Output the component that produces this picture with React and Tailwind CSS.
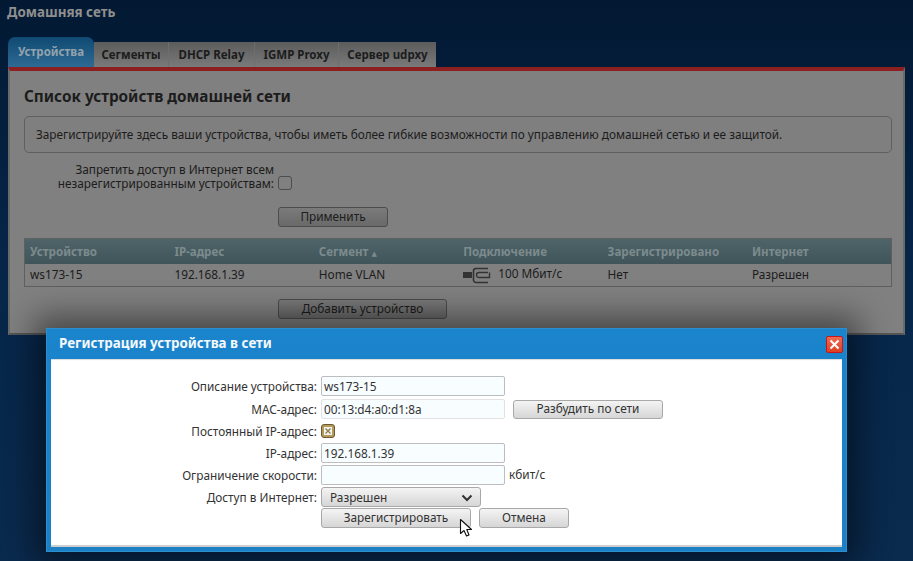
import React from "react";

function Btn({ className = "", children }) {
  return (
    <div className={"flex items-center justify-center rounded-[3px] border border-[#a8a8a8] bg-gradient-to-b from-[#f4f4f4] to-[#d6d6d6] text-[11.8px] leading-none text-[#333] " + className}>
      {children}
    </div>
  );
}

function DimBtn({ className = "", children }) {
  return (
    <div className={"flex items-center justify-center rounded-[3px] border border-[#4c4c4c] bg-gradient-to-b from-[#7b7b7b] to-[#696969] text-[11.8px] leading-none text-[#1c1c1c] " + className}>
      {children}
    </div>
  );
}

function Row({ label, className = "", children }) {
  return (
    <div className={"flex items-center " + className}>
      <div className="w-[270px] pr-[4px] pt-[1px] text-right text-[11.8px] leading-none text-[#333]">{label}</div>
      {children}
    </div>
  );
}

function Input({ value, className = "border-[#bdbdbd]" }) {
  return (
    <div className={"flex h-[20px] w-[184px] items-center rounded-[2px] border bg-[#f8fdff] pl-[2px] pt-[1px] text-[11.8px] leading-none text-[#333] " + className}>
      {value}
    </div>
  );
}

const cols = ["Устройство", "IP-адрес", "Сегмент", "Подключение", "Зарегистрировано", "Интернет"];

export default function App() {
  return (
    <div
      className="relative h-[561px] w-[913px] overflow-hidden bg-gradient-to-b from-[#031933] via-[#06264a] to-[#0a2a4e] text-[#1c1c1c]"
      style={{ fontFamily: '"Noto Sans", "DejaVu Sans", sans-serif' }}
    >
      <div className="px-[7px] pt-[4px] text-[13.4px] font-bold leading-[17px] text-[#8f8f8f]">Домашняя сеть</div>

      <div className="ml-[8px] mt-[16px] flex h-[30px] w-[897px] items-end text-[11.5px] font-bold">
        <div className="flex h-[30px] w-[86px] items-center justify-center rounded-t-[7px] bg-gradient-to-b from-[#0f4a73] to-[#2d6a94] pb-[1px] text-[#93a3ad]">Устройства</div>
        <div className="flex h-[25px] w-[75px] items-center justify-center border-r border-[#6e6e6e] bg-gradient-to-b from-[#5c5c5c] to-[#7a7a7a] text-[#1c1c1c]">Сегменты</div>
        <div className="flex h-[25px] w-[86px] items-center justify-center border-r border-[#6e6e6e] bg-gradient-to-b from-[#5c5c5c] to-[#7a7a7a] text-[#1c1c1c]">DHCP Relay</div>
        <div className="flex h-[25px] w-[84px] items-center justify-center border-r border-[#6e6e6e] bg-gradient-to-b from-[#5c5c5c] to-[#7a7a7a] text-[#1c1c1c]">IGMP Proxy</div>
        <div className="flex h-[25px] w-[97px] items-center justify-center bg-gradient-to-b from-[#5c5c5c] to-[#7a7a7a] text-[#1c1c1c]">Сервер udpxy</div>
      </div>

      <div className="mx-[8px] h-[268px] w-[897px] border-x-[2px] border-b-[2px] border-t-[4px] border-x-[#6a6a6a] border-b-[#555] border-t-[#8c1f1f] bg-[#808080] pl-[14px] pr-[11px]">
        <div className="pt-[15px] text-[15.3px] font-bold leading-[20px] text-[#1c1c1c]">Список устройств домашней сети</div>
        <div className="mt-[10px] flex h-[37px] items-center rounded-[5px] border border-[#5f5f5f] bg-[#7f7f7f] pl-[11px] text-[11.8px] leading-none text-[#1c1c1c]">
          Зарегистрируйте здесь ваши устройства, чтобы иметь более гибкие возможности по управлению домашней сетью и ее защитой.
        </div>
        <div className="mt-[9px] flex w-[268px] items-end text-[11.8px] leading-[14px]">
          <div className="flex-1 text-right">Запретить доступ в Интернет всем<br />незарегистрированным устройствам:</div>
          <div className="ml-[4px] h-[14px] w-[14px] shrink-0 rounded-[3px] border border-[#4d4d4d]" />
        </div>
        <DimBtn className="ml-[254px] mt-[17px] h-[20px] w-[110px]">Применить</DimBtn>

        <div className="mt-[11px] border border-[#5f5f5f]">
          <div className="grid h-[25px] grid-cols-[repeat(6,144.4px)] items-center bg-gradient-to-b from-[#4f6468] to-[#3f5559] pl-[5px] text-[11.6px] font-bold text-[#7d8b8e]">
            {cols.map((c) => (
              <div key={c}>{c}{c === "Сегмент" ? <span className="ml-[3px] text-[7px]">▲</span> : null}</div>
            ))}
          </div>
          <div className="grid h-[22px] grid-cols-[repeat(6,144.4px)] items-center pl-[5px] text-[11.8px] leading-none text-[#1c1c1c]">
            <div>ws173-15</div>
            <div>192.168.1.39</div>
            <div>Home VLAN</div>
            <div className="flex items-center">
              <svg width="28" height="17" viewBox="0 0 28 17" className="mr-[7px]">
                <rect x="0" y="5" width="9" height="6" fill="#333" />
                <path d="M25 1.5H13a2.5 2.5 0 0 0-2.5 2.5V13a2.5 2.5 0 0 0 2.5 2.5H25" fill="none" stroke="#333" strokeWidth="1.6" />
                <path d="M25 5.5H16a2.5 2.5 0 0 0 0 5H26.5V5.5" fill="none" stroke="#333" strokeWidth="1.4" />
              </svg>
              <span className="-translate-y-[1px]">100 Мбит/с</span>
            </div>
            <div>Нет</div>
            <div>Разрешен</div>
          </div>
        </div>
        <DimBtn className="ml-[254px] mt-[12px] h-[20px] w-[169px]">Добавить устройство</DimBtn>
      </div>

      <div className="absolute left-[46px] top-[328px] flex h-[224px] w-[801px] flex-col border border-[#2a8fd0] bg-gradient-to-b from-[#1a84cc] to-[#1c80c4] px-[4px] pb-[4px] shadow-[0_0_30px_12px_rgba(0,0,0,0.45)]">
        <div className="flex h-[30px] shrink-0 items-center justify-between pl-[8px]">
          <div className="text-[13.4px] font-bold leading-none text-[#f4f8fb]">Регистрация устройства в сети</div>
          <div className="-mr-[1px] flex h-[17px] w-[17px] items-center justify-center rounded-[2px] border border-[#c8161c] bg-gradient-to-b from-[#ee6a4e] to-[#dd3f20]">
            <svg width="11" height="11" viewBox="0 0 11 11"><path d="M1.5 1.5l8 8M9.5 1.5l-8 8" stroke="#fff" strokeWidth="2" /></svg>
          </div>
        </div>
        <div className="flex-1 border-b-[2px] border-[#cfcfcf] bg-white pt-[17px] shadow-[inset_0_1px_1px_rgba(0,0,0,0.15)]">
          <Row label="Описание устройства:"><Input value="ws173-15" /></Row>
          <Row label="МАС-адрес:" className="mt-[3px]">
            <Input value="00:13:d4:a0:d1:8a" className="border-[#e2e2e2]" />
            <Btn className="ml-[8px] h-[19px] w-[150px]">Разбудить по сети</Btn>
          </Row>
          <Row label="Постоянный IP-адрес:" className="mt-[5px] h-[14px]">
            <div className="flex h-[14px] w-[14px] items-center justify-center rounded-[3px] border border-[#6b5a2d] bg-[#b59a5e]">
              <div className="flex h-[8px] w-[8px] items-center justify-center bg-[#f5f5f0]">
                <svg width="6" height="6" viewBox="0 0 6 6"><path d="M0.5 0.5l5 5M5.5 0.5l-5 5" stroke="#8d7a4d" strokeWidth="1.3" /></svg>
              </div>
            </div>
          </Row>
          <Row label="IP-адрес:" className="mt-[5px]"><Input value="192.168.1.39" /></Row>
          <Row label="Ограничение скорости:" className="mt-[2px]">
            <Input value="" />
            <span className="ml-[4px] text-[11.8px] leading-none text-[#333]">кбит/с</span>
          </Row>
          <Row label="Доступ в Интернет:" className="mt-[2px]">
            <div className="flex h-[20px] w-[160px] items-center justify-between rounded-[3px] border border-[#a8a8a8] bg-gradient-to-b from-[#f4f4f4] to-[#d6d6d6] pl-[8px] pr-[7px] pt-[1px] text-[11.8px] leading-none text-[#333]">
              Разрешен
              <svg width="12" height="8" viewBox="0 0 12 8"><path d="M1.5 1.5L6 6l4.5-4.5" fill="none" stroke="#333" strokeWidth="2" /></svg>
            </div>
          </Row>
          <div className="mt-[1px] flex pl-[270px]">
            <Btn className="h-[20px] w-[150px]">Зарегистрировать</Btn>
            <Btn className="ml-[8px] h-[20px] w-[90px]">Отмена</Btn>
          </div>
        </div>
      </div>

      <svg className="absolute left-[459px] top-[518px]" width="14" height="20" viewBox="0 0 14 20">
        <path d="M1.5 1.5V15.5L5 12.5L7.5 18L10 17L7.8 11.5H12.5Z" fill="#fff" stroke="#111" strokeWidth="1.1" strokeLinejoin="round" />
      </svg>
    </div>
  );
}
